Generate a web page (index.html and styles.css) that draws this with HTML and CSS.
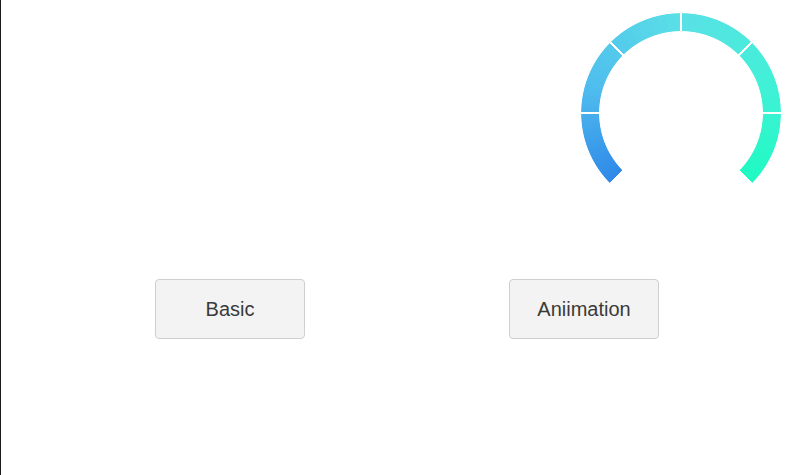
FILE: index.html
```html
<!DOCTYPE html>
<html lang="en">
<head>
<meta charset="utf-8">
<title>Gauge</title>
<link rel="stylesheet" href="styles.css">
</head>
<body>
<div class="page">
  <div class="chart-row">
    <div class="gauge" aria-label="gauge"></div>
  </div>
  <div class="button-row">
    <button class="btn" type="button">Basic</button>
    <button class="btn" type="button">Aniimation</button>
  </div>
</div>
</body>
</html>
```
FILE: styles.css
```css
html, body {
  margin: 0;
  padding: 0;
  background: #fff;
}
body {
  width: 791px;
  height: 475px;
  box-sizing: border-box;
  border-left: 1px solid #1a1a1a;
  font-family: "Liberation Sans", Arial, sans-serif;
  overflow: hidden;
}
.page {
  display: flex;
  flex-direction: column;
}
.chart-row {
  display: flex;
  justify-content: flex-end;
  padding: 13px 10px 0 0;
}
.gauge {
  width: 200px;
  height: 200px;
  background:
    repeating-conic-gradient(from 224.4deg, #fff 0deg 1.2deg, transparent 1.2deg 45deg),
    conic-gradient(from 225deg, #2f88e8 0deg, #4fbcee 60deg, #5ae0e6 135deg, #40f1d6 210deg, #1efac2 270deg, transparent 270deg);
  -webkit-mask-image: radial-gradient(circle closest-side, transparent 81.5px, #000 82.3px, #000 99.4px, transparent 100.2px);
  mask-image: radial-gradient(circle closest-side, transparent 81.5px, #000 82.3px, #000 99.4px, transparent 100.2px);
}
.button-row {
  display: flex;
  gap: 204px;
  padding-left: 154px;
  margin-top: 66px;
}
.btn {
  width: 150px;
  height: 60px;
  box-sizing: border-box;
  border: 1px solid #cfcfcf;
  border-radius: 4px;
  background: #f3f3f3;
  color: #3a3a3a;
  font-family: "Liberation Sans", Arial, sans-serif;
  font-size: 20px;
  padding: 1px 0 0;
}
```
